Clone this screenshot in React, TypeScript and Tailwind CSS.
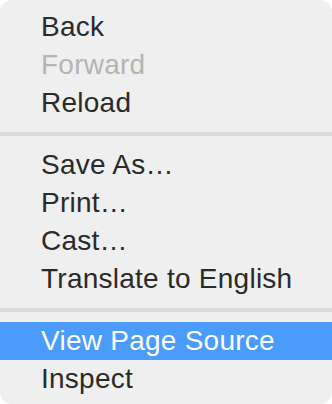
import React from 'react';

type Item = { label: string; disabled?: boolean; active?: boolean };

const groups: Item[][] = [
  [{ label: 'Back' }, { label: 'Forward', disabled: true }, { label: 'Reload' }],
  [{ label: 'Save As…' }, { label: 'Print…' }, { label: 'Cast…' }, { label: 'Translate to English' }],
  [{ label: 'View Page Source', active: true }, { label: 'Inspect' }],
];

const MenuItem: React.FC<{ item: Item }> = ({ item }) => {
  let color = 'text-[#2a2a2a]';
  if (item.disabled) color = 'text-[#b4b4b4]';
  if (item.active) color = 'text-white bg-[#4a9bfb]';
  return (
    <div className={`h-[38px] leading-[38px] pl-[41px] whitespace-nowrap ${color}`}>{item.label}</div>
  );
};

export default function App() {
  return (
    <div className="w-[332px] h-[404px] bg-white">
      <div
        className="w-full h-full bg-[#efefef] rounded-[12px] pt-[8px] text-[28px] tracking-[0.25px] overflow-hidden"
        style={{ fontFamily: '"Liberation Sans", Arial, sans-serif' }}
      >
        {groups.map((g, i) => (
          <div key={i}>
            {i > 0 && <div className="h-[4px] bg-[#dcdcdc] my-[10px]" />}
            {g.map((item) => (
              <MenuItem key={item.label} item={item} />
            ))}
          </div>
        ))}
      </div>
    </div>
  );
}
